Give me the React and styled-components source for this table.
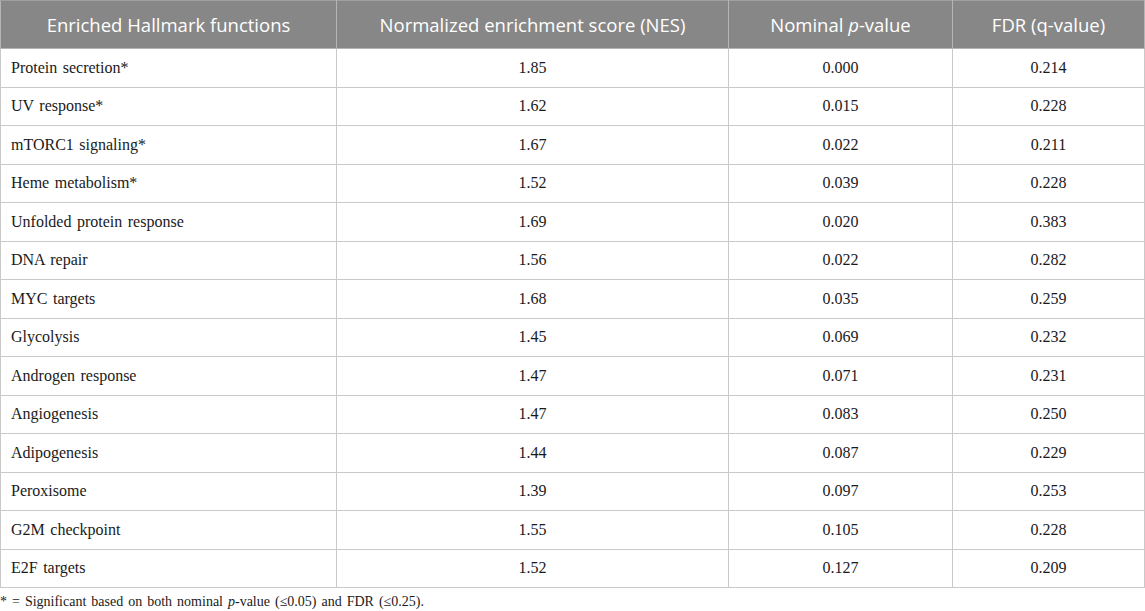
import React from 'react';
import styled, { createGlobalStyle } from 'styled-components';

const GlobalStyle = createGlobalStyle`
  html, body {
    margin: 0;
    padding: 0;
    background: #ffffff;
  }
`;

const rows = [
  ['Protein secretion*', '1.85', '0.000', '0.214'],
  ['UV response*', '1.62', '0.015', '0.228'],
  ['mTORC1 signaling*', '1.67', '0.022', '0.211'],
  ['Heme metabolism*', '1.52', '0.039', '0.228'],
  ['Unfolded protein response', '1.69', '0.020', '0.383'],
  ['DNA repair', '1.56', '0.022', '0.282'],
  ['MYC targets', '1.68', '0.035', '0.259'],
  ['Glycolysis', '1.45', '0.069', '0.232'],
  ['Androgen response', '1.47', '0.071', '0.231'],
  ['Angiogenesis', '1.47', '0.083', '0.250'],
  ['Adipogenesis', '1.44', '0.087', '0.229'],
  ['Peroxisome', '1.39', '0.097', '0.253'],
  ['G2M checkpoint', '1.55', '0.105', '0.228'],
  ['E2F targets', '1.52', '0.127', '0.209'],
];

const Wrapper = styled.div`
  width: 1145px;
`;

const Table = styled.table`
  width: 1144px;
  border-collapse: collapse;
  table-layout: fixed;
`;

const HeadCell = styled.th`
  height: 47px;
  padding: 0 8px;
  background: #878787;
  color: #ffffff;
  font-family: "Open Sans", "Noto Sans", sans-serif;
  font-size: 18.5px;
  font-weight: 400;
  text-align: center;
  border: 1px solid #b4b4b4;
  border-top-color: #a0a0a0;
`;

const Cell = styled.td`
  height: 37.5px;
  padding: 0 10px;
  font-family: "Liberation Serif", "DejaVu Serif", serif;
  font-size: 16px;
  color: #1a1a1a;
  text-align: ${({ $left }) => ($left ? 'left' : 'center')};
  border: 1px solid #c9c9c9;
  word-spacing: 1.5px;
`;

const Note = styled.div`
  margin-top: 6px;
  font-family: "Liberation Serif", "DejaVu Serif", serif;
  font-size: 14px;
  color: #1a1a1a;
  word-spacing: 1.5px;
`;

export default function App() {
  return (
    <Wrapper>
      <GlobalStyle />
      <Table>
        <colgroup>
          <col style={{ width: 336 }} />
          <col style={{ width: 392 }} />
          <col style={{ width: 224 }} />
          <col style={{ width: 192 }} />
        </colgroup>
        <thead>
          <tr>
            <HeadCell>Enriched Hallmark functions</HeadCell>
            <HeadCell>Normalized enrichment score (NES)</HeadCell>
            <HeadCell>Nominal <i>p</i>-value</HeadCell>
            <HeadCell>FDR (q-value)</HeadCell>
          </tr>
        </thead>
        <tbody>
          {rows.map((r) => (
            <tr key={r[0]}>
              <Cell $left>{r[0]}</Cell>
              <Cell>{r[1]}</Cell>
              <Cell>{r[2]}</Cell>
              <Cell>{r[3]}</Cell>
            </tr>
          ))}
        </tbody>
      </Table>
      <Note>* = Significant based on both nominal <i>p</i>-value (≤0.05) and FDR (≤0.25).</Note>
    </Wrapper>
  );
}
